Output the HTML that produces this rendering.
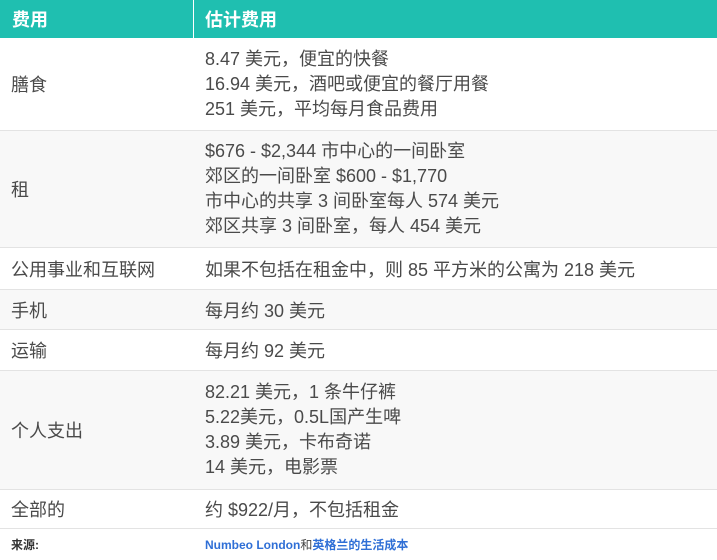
<!DOCTYPE html><html><head><meta charset="utf-8"><style>
body{margin:0;width:717px;height:560px;overflow:hidden;background:#fff;font-family:"Liberation Sans","Noto Sans CJK SC",sans-serif;color:#4a4a4a;font-size:18px}
.r{position:absolute;left:0;width:717px;border-bottom:1px solid #e3e3e3;box-sizing:border-box}
.c1{position:absolute;left:11px;top:0;bottom:0;display:flex;align-items:center;white-space:nowrap}
.c2{position:absolute;left:205px;top:0;bottom:0;display:flex;flex-direction:column;justify-content:center;line-height:25px;white-space:nowrap}
.c3{position:absolute;left:205px;top:0;bottom:0;display:flex;align-items:center;white-space:nowrap}
.g{background:#f8f8f8}
.h{background:#1fbfb0;color:#fff;font-weight:bold;border:none}
</style></head><body>
<div class="r h" style="top:0;height:38px"><div class="c1" style="left:12px">费用</div><div style="position:absolute;left:193px;top:0;width:1px;height:38px;background:#fff"></div><div class="c3">估计费用</div></div>
<div class="r" style="top:38px;height:93px"><div class="c1">膳食</div><div class="c2"><div>8.47 美元，便宜的快餐</div><div>16.94 美元，酒吧或便宜的餐厅用餐</div><div>251 美元，平均每月食品费用</div></div></div>
<div class="r g" style="top:131px;height:117px"><div class="c1">租</div><div class="c2"><div>$676 - $2,344 市中心的一间卧室</div><div>郊区的一间卧室 $600 - $1,770</div><div>市中心的共享 3 间卧室每人 574 美元</div><div>郊区共享 3 间卧室，每人 454 美元</div></div></div>
<div class="r" style="top:248px;height:42px"><div class="c1">公用事业和互联网</div><div class="c3">如果不包括在租金中，则 85 平方米的公寓为 218 美元</div></div>
<div class="r g" style="top:290px;height:40px"><div class="c1">手机</div><div class="c3">每月约 30 美元</div></div>
<div class="r" style="top:330px;height:41px"><div class="c1">运输</div><div class="c3">每月约 92 美元</div></div>
<div class="r g" style="top:371px;height:119px"><div class="c1">个人支出</div><div class="c2"><div>82.21 美元，1 条牛仔裤</div><div>5.22美元，0.5L国产生啤</div><div>3.89 美元，卡布奇诺</div><div>14 美元，电影票</div></div></div>
<div class="r" style="top:490px;height:39px"><div class="c1">全部的</div><div class="c3">约 $922/月，不包括租金</div></div>
<div class="r" style="top:529px;height:31px;border:none;font-size:12px;font-weight:bold"><div class="c1" style="color:#333">来源:</div><div class="c3" style="color:#2f6fd6">Numbeo London<span style="color:#444;font-weight:normal">和</span>英格兰的生活成本</div></div>
</body></html>
